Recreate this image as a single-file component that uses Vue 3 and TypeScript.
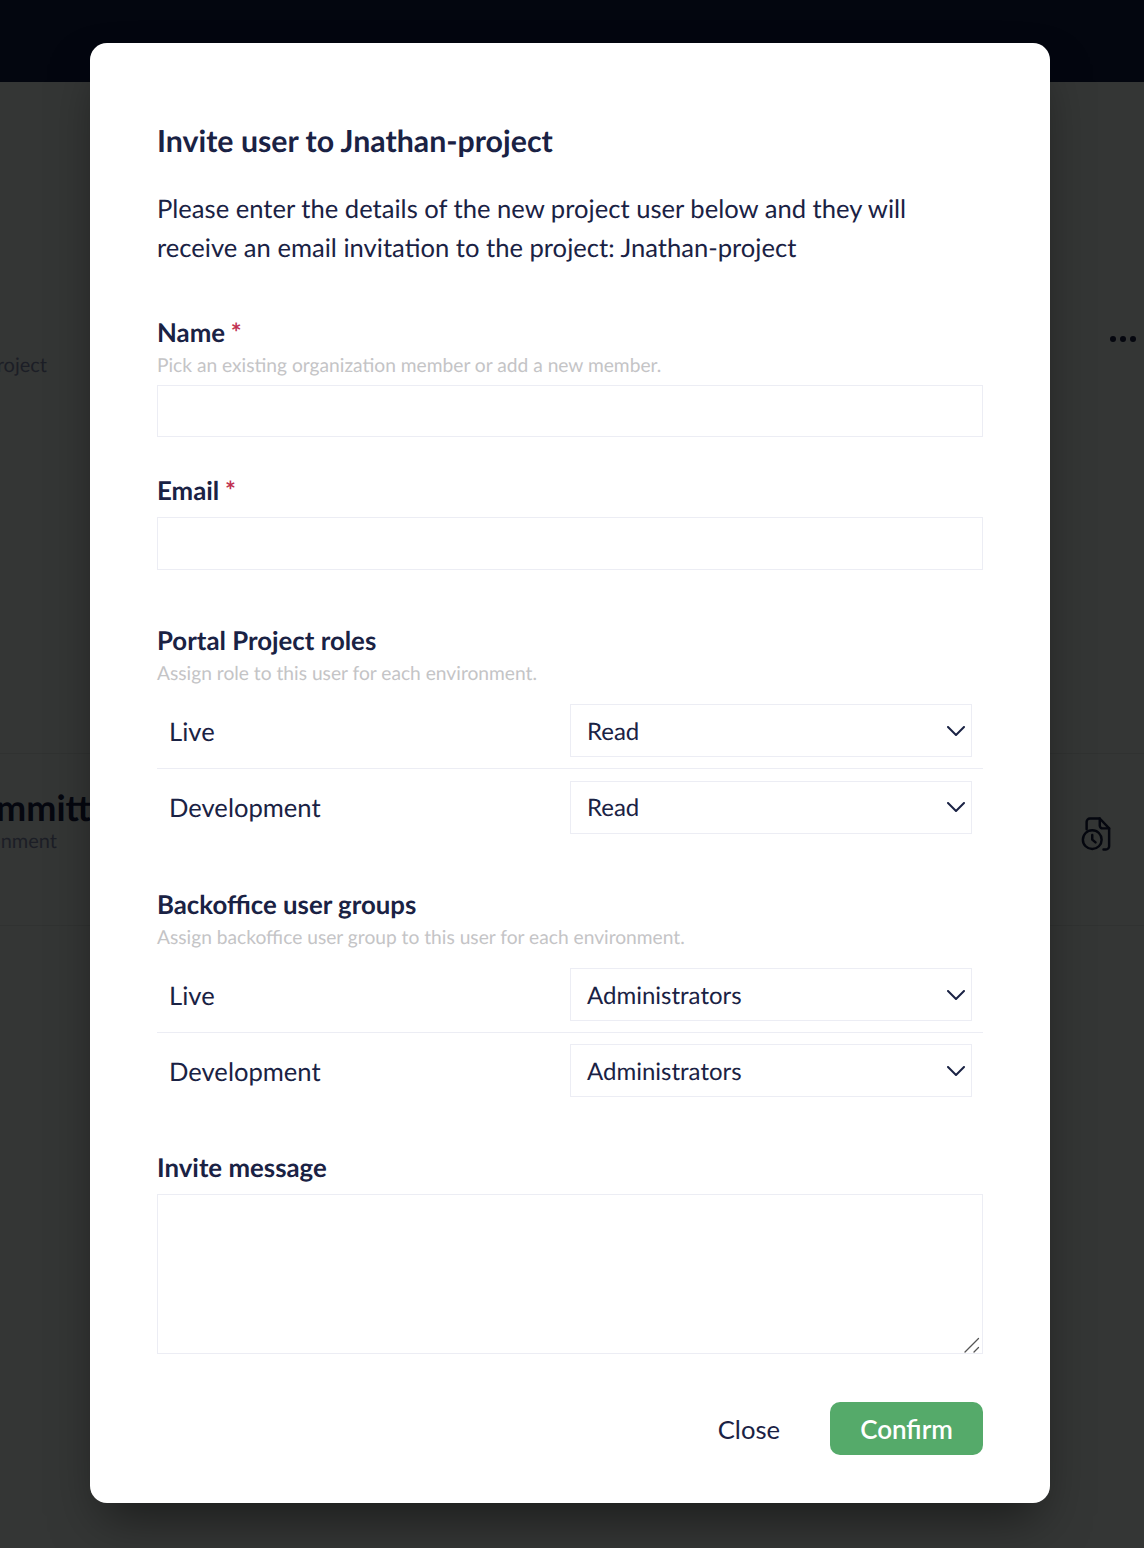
<script setup lang="ts">
interface Row { env: string; value: string }
interface Group { title: string; hint: string; rows: Row[] }

const groups: Group[] = [
  {
    title: 'Portal Project roles',
    hint: 'Assign role to this user for each environment.',
    rows: [
      { env: 'Live', value: 'Read' },
      { env: 'Development', value: 'Read' },
    ],
  },
  {
    title: 'Backoffice user groups',
    hint: 'Assign backoffice user group to this user for each environment.',
    rows: [
      { env: 'Live', value: 'Administrators' },
      { env: 'Development', value: 'Administrators' },
    ],
  },
]
</script>

<template>
  <div class="page">
    <header class="topbar"></header>
    <div class="backdrop-content">
      <span class="bg-project">Project</span>
      <span class="bg-dots"><i></i><i></i><i></i></span>
      <div class="bg-line bg-line-1"></div>
      <span class="bg-title">Committee</span>
      <span class="bg-env">Environment</span>
      <svg class="bg-file" viewBox="0 0 32 36" fill="none" stroke="#05070f" stroke-width="2.6" stroke-linecap="round" stroke-linejoin="round">
        <path d="M6 13V5a3.5 3.5 0 0 1 3.5-3.5H20L30 12v19a3.5 3.5 0 0 1-3.5 3.5H24" />
        <path d="M20 1.5V9a3 3 0 0 0 3 3h7" />
        <circle cx="12" cy="24" r="10" />
        <path d="M12 19v5l3.5 3" />
      </svg>
      <div class="bg-line bg-line-2"></div>
    </div>

    <div class="overlay">
      <section class="modal">
        <h2 class="title">Invite user to Jnathan-project</h2>
        <p class="intro">
          Please enter the details of the new project user below and they will<br />
          receive an email invitation to the project: Jnathan-project
        </p>

        <div class="field field-name">
          <label class="label">Name <span class="req">*</span></label>
          <p class="hint">Pick an existing organization member or add a new member.</p>
          <input class="control" type="text" />
        </div>

        <div class="field field-email">
          <label class="label">Email <span class="req">*</span></label>
          <input class="control control-email" type="text" />
        </div>

        <div v-for="group in groups" :key="group.title" class="group">
          <h3 class="label">{{ group.title }}</h3>
          <p class="hint">{{ group.hint }}</p>
          <div v-for="row in group.rows" :key="row.env" class="row">
            <span class="env">{{ row.env }}</span>
            <div class="select">
              <span class="value">{{ row.value }}</span>
              <svg class="chev" viewBox="0 0 18 10" fill="none" stroke="#1a2244" stroke-width="2" stroke-linecap="round" stroke-linejoin="round">
                <path d="M1 1 9 9l8-8" />
              </svg>
            </div>
          </div>
        </div>

        <div class="field field-message">
          <label class="label">Invite message</label>
          <div class="area-wrap">
            <textarea class="control area"></textarea>
            <svg class="grip" viewBox="0 0 16 16" fill="none" stroke="#555" stroke-width="1.3" stroke-linecap="round">
              <path d="M1 15 14.500 1.500M10 15l4.500-4.500" />
            </svg>
          </div>
        </div>

        <div class="actions">
          <button class="btn-close" type="button">Close</button>
          <button class="btn-confirm" type="button">Confirm</button>
        </div>
      </section>
    </div>
  </div>
</template>

<style>
html, body { margin: 0; padding: 0; background: #343635; }
</style>

<style scoped>
* { box-sizing: border-box; }
.page {
  position: relative;
  width: 1144px;
  height: 1548px;
  overflow: hidden;
  background: #343635;
  font-family: Lato, "Open Sans", sans-serif;
  color: #1a2244;
  text-rendering: geometricPrecision;
}
.topbar { height: 82px; background: #03060f; }
.backdrop-content { position: absolute; inset: 0; }
.bg-project { position: absolute; right: 1097px; top: 353px; white-space: nowrap; font-size: 20px; line-height: 24px; color: #1c1e26; }
.bg-dots { position: absolute; left: 1110px; top: 336px; display: flex; gap: 4px; }
.bg-dots i { width: 6px; height: 6px; border-radius: 50%; background: #05070f; }
.bg-line { position: absolute; left: 0; right: 0; height: 1px; background: #303231; }
.bg-line-1 { top: 753px; }
.bg-line-2 { top: 925px; }
.bg-title { position: absolute; left: -48px; top: 786px; white-space: nowrap; font-size: 36px; line-height: 42px; font-weight: 700; color: #05070f; }
.bg-env { position: absolute; right: 1087px; top: 829px; white-space: nowrap; font-size: 20px; line-height: 24px; color: #1c1e26; }
.bg-file { position: absolute; left: 1081px; top: 817px; width: 30px; height: 34px; }

.overlay { position: absolute; inset: 0; display: flex; justify-content: center; align-items: flex-start; padding: 43px 4px 0 0; }
.modal {
  width: 960px;
  height: 1460px;
  padding: 0 67px;
  background: #fff;
  border-radius: 17px;
  box-shadow: 0 25px 50px -12px rgba(0, 0, 0, 0.5);
}
.title { margin: 0; padding-top: 80px; font-size: 30.3px; line-height: 36px; font-weight: 700; }
.intro { margin: 31px 0 0; font-size: 25.6px; line-height: 39px; }
.label { display: block; margin: 0; font-size: 25.8px; line-height: 32px; font-weight: 700; }
.req { margin-left: -0.5px; font-size: 25.6px; font-weight: 700; color: #c0304f; }
.hint { margin: 5px 0 0; font-size: 19.2px; line-height: 24px; color: #c4c4c6; }
.control {
  display: block;
  width: 100%;
  height: 52px;
  border: 1px solid #ecedf4;
  border-radius: 0;
  background: #fff;
  outline: none;
  font: inherit;
}
.field-name { margin-top: 49px; }
.field-name .hint { margin-bottom: 7px; }
.field-email { margin-top: 38px; }
.field-email .label { margin-bottom: 10px; }
.control-email { height: 53px; }
.group { margin-top: 55px; }
.group + .group { margin-top: 44px; }
.group .hint { margin-top: 5px; margin-bottom: 7px; }
.group + .group .hint { margin-bottom: 7.25px; }
.row {
  display: grid;
  grid-template-columns: 413px 402px;
  align-items: center;
  height: 76px;
  border-bottom: 1px solid #ecedf4;
}
.group + .group .row { height: 75.5px; }
.row:last-child { border-bottom: 0; }
.env { padding: 2px 0 0 12px; font-size: 25.6px; line-height: 32px; }
.select {
  display: flex;
  align-items: center;
  justify-content: space-between;
  height: 53px;
  padding: 0 6px 0 16px;
  border: 1px solid #ecedf4;
  font-size: 24px;
}
.value { padding-top: 1px; }
.chev { width: 18px; height: 10px; }
.field-message { margin-top: 44px; }
.field-message .label { margin-bottom: 10px; }
.area-wrap { position: relative; }
.area { height: 160px; resize: none; }
.grip { position: absolute; right: 3px; bottom: 1px; width: 16px; height: 16px; }
.actions { display: flex; justify-content: flex-end; align-items: center; gap: 50px; margin-top: 48px; }
.btn-close, .btn-confirm { font: inherit; font-size: 25.6px; border: 0; cursor: pointer; }
.btn-close { padding: 0 0 0 1px; background: none; color: #1a2244; }
.btn-confirm {
  width: 153px;
  height: 53px;
  border-radius: 10px;
  background: #55aa6a;
  color: #fff;
  font-size: 26px;
  font-weight: 600;
}
</style>
